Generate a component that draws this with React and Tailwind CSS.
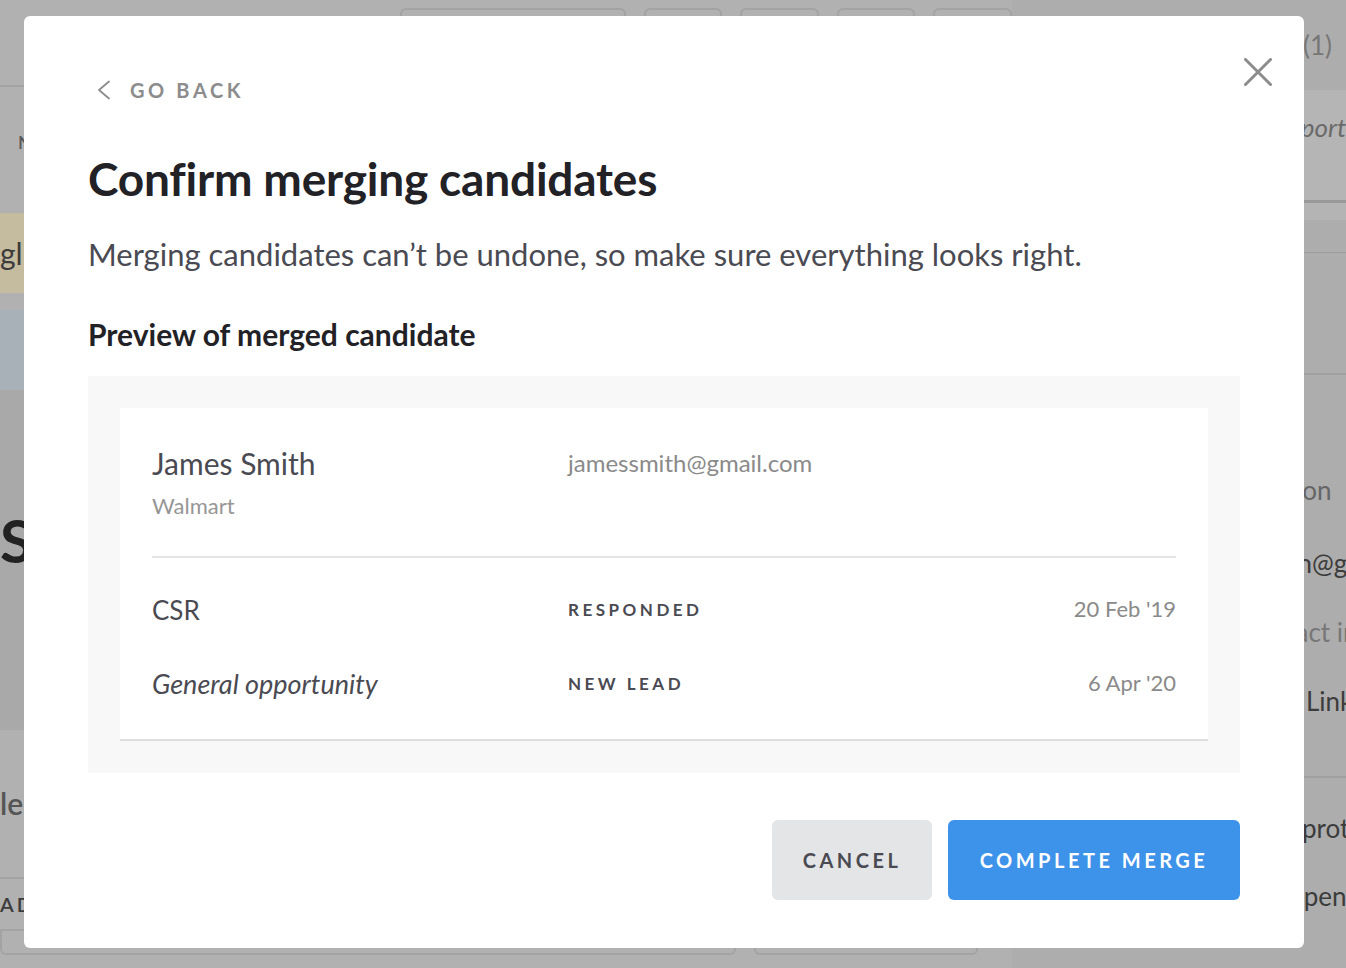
const ROWS = [
  { title: 'CSR', italic: false, stage: 'Responded', date: "20 Feb '19" },
  { title: 'General opportunity', italic: true, stage: 'New lead', date: "6 Apr '20" },
];

// Page behind the modal, already dimmed by the overlay
function Backdrop() {
  return (
    <div className="h-[968px] w-full overflow-hidden bg-[#b1b1b1] text-[#3c3c3c] flex">
      <div className="w-[1012px] flex flex-col">
        <div className="h-[87px] border-b-2 border-[#a3a3a3] flex items-start pt-[8px] gap-[18px] pl-[400px]">
          <div className="w-[227px] h-[30px] rounded-t-md border-2 border-[#a3a3a3]" />
          {[0, 1, 2, 3].map(i => (
            <div key={i} className="w-[79px] h-[30px] rounded-md border-2 border-[#a3a3a3]" />
          ))}
        </div>
        <div className="pl-[18px] pt-[42px] h-[126px] text-[18px] font-semibold text-[#5a5a5a]">N</div>
        <div className="h-[80px] bg-[#c5bb9f] flex items-center text-[30px]">gl</div>
        <div className="h-[17px]" />
        <div className="h-[80px] bg-[#a8b1b8]" />
        <div className="h-[340px] bg-[#a9a9a9] pt-[120px] text-[60px] font-bold leading-none text-[#222]">S</div>
        <div className="h-[147px] flex items-center text-[30px] font-semibold text-[#555]">le</div>
        <div className="h-[54px] border-t-2 border-b-2 border-[#a3a3a3] flex items-center text-[20px] font-semibold tracking-[3px]">AD</div>
        <div className="flex gap-[18px]">
          <div className="w-[736px] h-[24px] rounded-b-md border-2 border-t-0 border-[#a3a3a3]" />
          <div className="w-[224px] h-[24px] rounded-b-md border-2 border-t-0 border-[#a3a3a3]" />
        </div>
      </div>
      <div className="flex-1 bg-[#adadad] flex flex-col text-[26px] whitespace-nowrap overflow-hidden">
        <div className="h-[90px] pt-[26px] pl-[291px] text-[#777]">(1)</div>
        <div className="h-[110px] bg-[#b5b5b5] pt-[18px] pl-[268px] italic text-[#6a6a6a]">report</div>
        <div className="h-[3px] bg-[#999]" />
        <div className="h-[17px] bg-[#b4b4b4]" />
        <div className="h-[33px] border-b border-[#9c9c9c]" />
        <div className="h-[122px] border-b-2 border-[#a0a0a0]" />
        <div className="pt-[96px] pl-[222px] text-[#666]">Location</div>
        <div className="pt-[34px] pl-[250px]">john@gmail</div>
        <div className="pt-[30px] pl-[228px] text-[#777]">Contact info</div>
        <div className="pt-[30px] pl-[294px]">LinkedIn</div>
        <div className="mt-[55px] border-t-2 border-[#a0a0a0] pt-[31px] pl-[290px]">protected</div>
        <div className="pt-[29px] pl-[277px]">open</div>
      </div>
    </div>
  );
}

export default function App() {
  return (
    <div className="relative w-full h-[968px] overflow-hidden" style={{ fontFamily: 'Lato, "Noto Sans", sans-serif' }}>
      <Backdrop />

      {/* Modal */}
      <div className="absolute left-[24px] top-[16px] w-[1280px] h-[932px] bg-white rounded-md px-16 pt-[62px]">
        <button className="absolute right-[32px] top-[42px] text-[#8c8c8c] bg-transparent border-none cursor-pointer p-0">
          <svg width="28" height="28" viewBox="0 0 28 28" fill="none" stroke="currentColor" strokeWidth="3" strokeLinecap="round">
            <path d="M1.5 1.5l25 25M26.5 1.5l-25 25" />
          </svg>
        </button>

        <button className="flex items-center text-[#8c8c8c] bg-transparent border-none cursor-pointer h-[24px] p-0">
          <svg width="24" height="20" viewBox="0 0 24 20" fill="none" stroke="currentColor" strokeWidth="1.8" strokeLinecap="round" strokeLinejoin="round" className="ml-[8px]">
            <path d="M13 1.5L3 10l10 8.5" />
          </svg>
          <span className="ml-[10px] text-[20px] font-bold tracking-[3.6px] leading-none">GO BACK</span>
        </button>

        <h1 className="mt-[51px] text-[46px] leading-[52px] font-bold text-[#222226] tracking-[-0.2px]">
          Confirm merging candidates
        </h1>
        <p className="mt-[29px] text-[31px] leading-[40px] text-[#4a4a52]">
          Merging candidates can’t be undone, so make sure everything looks right.
        </p>

        <h2 className="mt-[42px] text-[30px] leading-[36px] font-bold text-[#222226]">
          Preview of merged candidate
        </h2>

        <div className="mt-[24px] bg-[#f8f8f8] p-8">
          <div className="bg-white border-b-2 border-[#dedede] px-8">
            <div className="pt-[37px] pb-[36px] border-b-2 border-[#e4e4e4] grid grid-cols-[416px_1fr]">
              <div>
                <div className="text-[30px] leading-[36px] text-[#4a4a52]">James Smith</div>
                <div className="mt-[11px] text-[22px] leading-[28px] text-[#969696]">Walmart</div>
              </div>
              <div className="text-[24px] leading-[36px] text-[#8a8a8a]">jamessmith@gmail.com</div>
            </div>

            <div className="pt-[15px] pb-[18px]">
              {ROWS.map(r => (
                <div key={r.title} className="h-[74px] grid grid-cols-[416px_1fr_auto] items-center">
                  <div className={`text-[26px] text-[#4a4a52] ${r.italic ? 'italic text-[27px]' : ''}`}>{r.title}</div>
                  <div className="text-[17px] font-bold uppercase tracking-[3.5px] text-[#4a4a52]">{r.stage}</div>
                  <div className="text-[22px] text-[#8a8a8a] -mt-[4px]">{r.date}</div>
                </div>
              ))}
            </div>
          </div>
        </div>

        <div className="mt-[47px] flex justify-end gap-4">
          <button className="w-[160px] h-[80px] rounded-md bg-[#e4e5e7] text-[#4a4a52] text-[20px] font-bold tracking-[3.5px] border-none cursor-pointer">
            CANCEL
          </button>
          <button className="w-[292px] h-[80px] rounded-md bg-[#3d92ea] text-white text-[20px] font-bold tracking-[3.5px] border-none cursor-pointer">
            COMPLETE MERGE
          </button>
        </div>
      </div>
    </div>
  );
}
